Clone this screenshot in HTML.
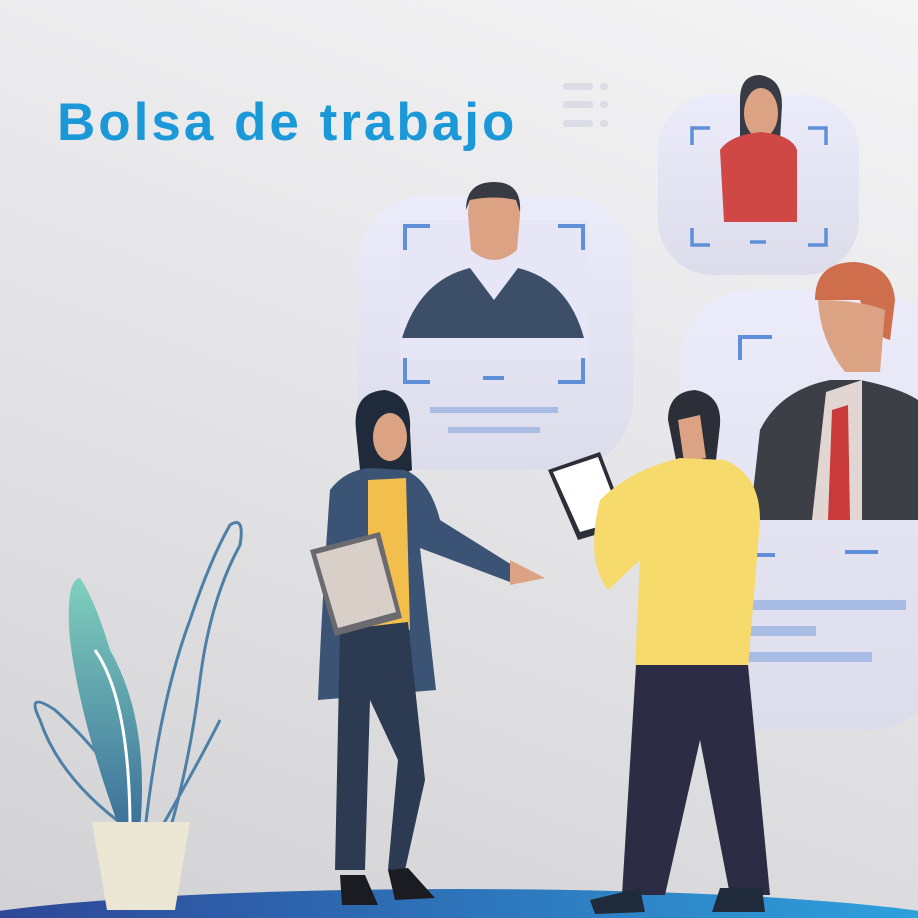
<!DOCTYPE html>
<html><head><meta charset="utf-8"><style>
html,body{margin:0;padding:0;width:918px;height:918px;overflow:hidden;}
body{background:linear-gradient(200deg,#f4f4f5 0%,#e6e6e8 45%,#d2d2d4 100%);position:relative;font-family:"Liberation Sans",sans-serif;}
h1{position:absolute;left:57px;top:92px;margin:0;font-size:53px;font-weight:bold;color:#1a98d8;letter-spacing:3px;line-height:62px;}
svg{position:absolute;left:0;top:0;display:block;}
</style></head><body>
<svg width="918" height="918" viewBox="0 0 918 918">
<defs>
<linearGradient id="card" x1="0" y1="0" x2="0" y2="1"><stop offset="0" stop-color="#ebebfa"/><stop offset="1" stop-color="#dcdcea"/></linearGradient>
<linearGradient id="floor" x1="0" y1="0" x2="1" y2="0"><stop offset="0" stop-color="#2e3f91"/><stop offset="1" stop-color="#2ea8e2"/></linearGradient>
<linearGradient id="leaf" x1="0" y1="0" x2="0" y2="1"><stop offset="0" stop-color="#7fd0bd"/><stop offset="1" stop-color="#3c6f9a"/></linearGradient>
</defs>
<g fill="#dcdce6"><rect x="563" y="83" width="30" height="7" rx="3"/><rect x="563" y="101" width="30" height="7" rx="3"/><rect x="563" y="120" width="30" height="7" rx="3"/><rect x="600" y="83" width="8" height="7" rx="3"/><rect x="600" y="101" width="8" height="7" rx="3"/><rect x="600" y="120" width="8" height="7" rx="3"/></g>
<rect x="357" y="195" width="276" height="275" rx="70" fill="url(#card)"/>
<rect x="400" y="220" width="188" height="140" fill="#e6e6f7"/>
<path d="M468 215 Q468 185 494 184 Q520 185 520 215 L517 250 Q494 270 471 250Z" fill="#dba383"/>
<path d="M466 210 Q466 182 494 182 Q522 182 520 212 L516 200 Q494 195 470 200Z" fill="#383a44"/>
<path d="M402 338 Q420 280 470 268 L494 300 L518 268 Q568 280 584 338Z" fill="#3d4f68"/>
<g fill="none" stroke="#5f8fd8" stroke-width="4"><path d="M405 250V226H430"/><path d="M558 226H583V250"/><path d="M405 358V382H430"/><path d="M558 382H583V358"/><path d="M483 378H504"/></g>
<rect x="430" y="407" width="128" height="6" fill="#a8bce4"/><rect x="448" y="427" width="92" height="6" fill="#a8bce4"/>
<rect x="658" y="95" width="201" height="180" rx="55" fill="url(#card)"/>
<path d="M740 100 Q740 75 760 75 Q782 78 782 105 L780 140 L740 140Z" fill="#383a44"/>
<ellipse cx="761" cy="113" rx="17" ry="25" fill="#dba383"/>
<path d="M720 150 Q730 135 761 132 Q792 135 797 150 L797 222 H724Z" fill="#cf4846"/>
<g fill="none" stroke="#5f8fd8" stroke-width="3.5"><path d="M692 145V128H710"/><path d="M808 128H826V145"/><path d="M692 228V245H710"/><path d="M808 245H826V228"/><path d="M750 242H766"/></g>
<rect x="680" y="290" width="260" height="440" rx="70" fill="url(#card)"/>
<path d="M740 360V337H772" fill="none" stroke="#5f8fd8" stroke-width="4"/>
<path d="M815 300 Q815 262 855 262 Q892 265 895 300 L890 340 Q870 335 860 300Z" fill="#cf6e4c"/>
<path d="M818 300 Q820 340 845 372 L880 372 L885 310 Q860 300 818 300Z" fill="#dba383"/>
<path d="M760 430 Q780 390 830 380 L860 380 Q900 388 918 400 V520 H750Z" fill="#3c3f46"/>
<path d="M826 392 L862 380 L862 520 L812 520Z" fill="#e2d6d2"/>
<path d="M832 410 L848 405 L850 520 L828 520Z" fill="#c93a3a"/>
<path d="M740 555H775M845 552H878" stroke="#5f8fd8" stroke-width="4"/>
<rect x="738" y="600" width="168" height="10" fill="#a8bce4"/><rect x="742" y="626" width="74" height="10" fill="#a8bce4"/><rect x="742" y="652" width="130" height="10" fill="#a8bce4"/>
<ellipse cx="459" cy="935" rx="540" ry="46" fill="url(#floor)"/>
<g fill="none" stroke="#4e7fa6" stroke-width="3">
<path d="M145 830 Q160 700 190 620 Q210 560 230 525 Q245 515 240 545 Q210 600 200 680 Q190 760 170 830"/>
<path d="M130 830 Q60 780 40 720 Q25 690 55 710 Q100 750 130 800"/>
<path d="M160 830 Q200 760 220 720"/>
</g>
<path d="M120 830 Q80 720 70 640 Q65 580 80 578 Q95 600 110 650 Q150 720 140 830Z" fill="url(#leaf)"/>
<path d="M95 650 Q130 700 130 830" stroke="#fff" stroke-width="3" fill="none"/>
<path d="M92 822 H190 L175 910 H107Z" fill="#ece6d4"/>
<path d="M356 430 Q352 392 385 390 Q412 395 410 430 L412 470 Q395 480 360 470Z" fill="#1f2b3a"/>
<ellipse cx="390" cy="437" rx="17" ry="24" fill="#dba383"/>
<path d="M330 490 Q345 470 370 468 L405 470 Q430 480 440 520 L520 570 L510 582 L420 548 L436 690 L318 700 Q322 600 330 490Z" fill="#3b5375"/>
<path d="M368 480 L406 478 L410 630 L368 630Z" fill="#f2be4c"/>
<path d="M510 560 L545 578 L510 585Z" fill="#dba383"/>
<path d="M340 630 L408 622 L425 780 L405 870 L388 870 L398 760 L370 700 L365 870 L335 870Z" fill="#2c3a52"/>
<path d="M310 550 L380 532 L402 618 L335 636Z" fill="#6b6a70"/><path d="M316 554 L376 538 L396 612 L338 628Z" fill="#d9cfc9"/>
<path d="M340 875 L365 875 L378 905 L342 905Z M388 870 L408 868 L435 898 L395 900Z" fill="#1b1b22"/>
<path d="M548 470 L600 452 L628 525 L578 540Z" fill="#2c2e38"/><path d="M553 472 L598 457 L622 520 L580 532Z" fill="#ffffff"/>
<path d="M668 420 Q668 392 695 390 Q722 395 720 425 L716 460 L676 460Z" fill="#2c2e38"/>
<path d="M678 420 L700 415 L706 458 L684 462Z" fill="#dba383"/>
<path d="M600 500 Q630 470 680 458 L725 460 Q760 475 760 520 L748 668 L635 668 L640 560 L608 590 Q585 560 600 500Z" fill="#f6da6c"/>
<path d="M636 665 L748 665 L770 895 L730 895 L700 740 L665 895 L622 895Z" fill="#2c2d44"/>
<path d="M590 900 L640 888 L645 912 L595 914Z M720 888 L762 888 L765 912 L712 912Z" fill="#1f2a3a"/>
</svg>
<h1>Bolsa de trabajo</h1>
</body></html>
